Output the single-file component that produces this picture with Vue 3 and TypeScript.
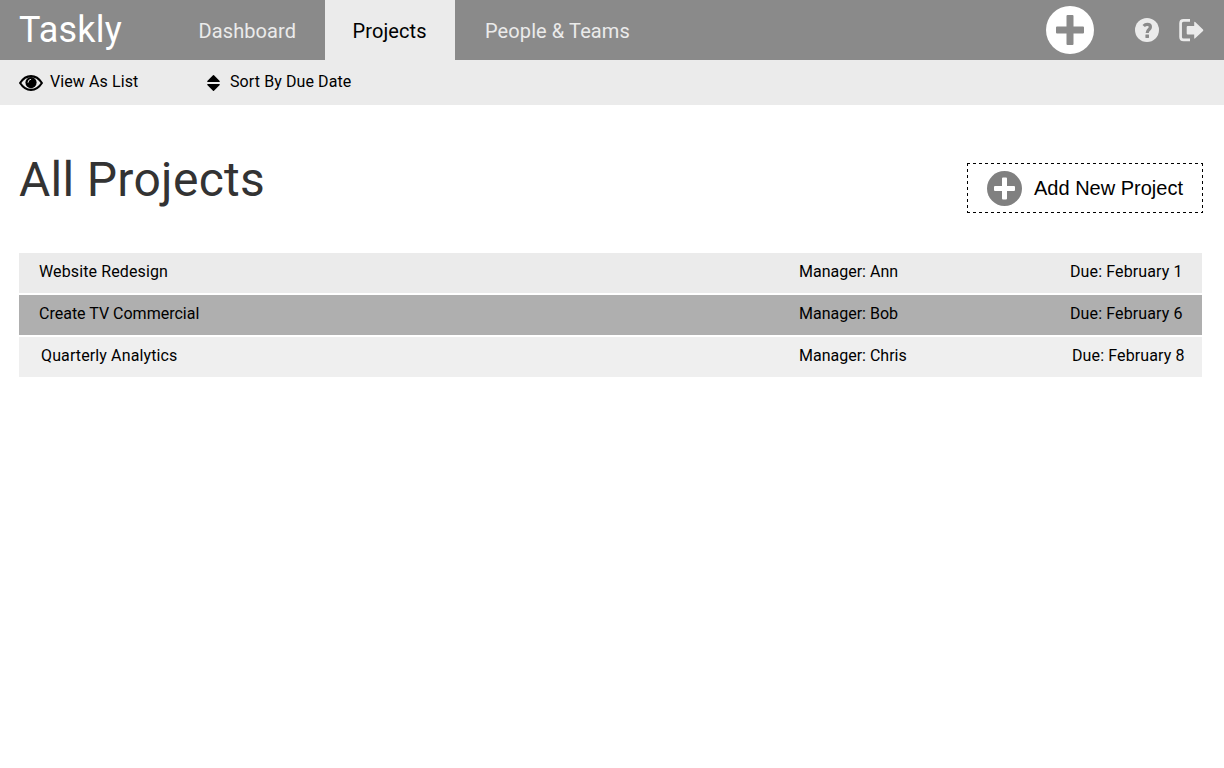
<script setup lang="ts">
interface Tab {
  label: string
  key: string
}

interface Project {
  name: string
  manager: string
  due: string
  tone: string
}

const tabs: Tab[] = [
  { label: 'Dashboard', key: 'dashboard' },
  { label: 'Projects', key: 'projects' },
  { label: 'People & Teams', key: 'people' },
]
const activeTab = 'projects'

const projects: Project[] = [
  { name: 'Website Redesign', manager: 'Ann', due: 'February 1', tone: 'plain' },
  { name: 'Create TV Commercial', manager: 'Bob', due: 'February 6', tone: 'selected' },
  { name: 'Quarterly Analytics', manager: 'Chris', due: 'February 8', tone: 'light' },
]
</script>

<template>
  <div class="page">
    <header class="topbar">
      <div class="brand"><span>Taskly</span></div>
      <nav class="tabs">
        <a v-for="tab in tabs" :key="tab.key" :class="['tab', tab.key, { active: tab.key === activeTab }]">
          <span>{{ tab.label }}</span>
        </a>
      </nav>
      <div class="actions">
        <svg class="add" viewBox="0 0 48 48">
          <circle cx="24" cy="24" r="24" fill="#fff" />
          <path d="M21.500 9h5a1 1 0 0 1 1 1v10.500h9.500a1 1 0 0 1 1 1v5a1 1 0 0 1-1 1h-9.500v10.500a1 1 0 0 1-1 1h-5a1 1 0 0 1-1-1v-10.500H11a1 1 0 0 1-1-1v-5a1 1 0 0 1 1-1h9.500V10a1 1 0 0 1 1-1z" fill="#8a8a8a" />
        </svg>
        <svg class="help" viewBox="0 0 24 24">
          <circle cx="12" cy="12" r="12" fill="#ebebeb" />
          <path d="M8.700 8C9.700 6.900 10.900 6.400 12.300 6.400c1.900 0 3.100 1 3.100 2.600 0 2.600-3.200 2.400-3.200 5.900" fill="none" stroke="#8a8a8a" stroke-width="3.200" />
          <rect x="10.400" y="16.400" width="3.600" height="3.600" rx=".4" fill="#8a8a8a" />
        </svg>
        <svg class="exit" viewBox="0 0 25 24">
          <path d="M11 2.300H4.500Q1.600 2.300 1.600 5.200V19Q1.600 21.900 4.500 21.900H11" fill="none" stroke="#ebebeb" stroke-width="2.700" />
          <path d="M8.700 8.100H15.200V4.500Q15.200 3.200 16.200 4.100L24 11.500Q24.700 12.200 24 12.900L16.200 20.300Q15.200 21.200 15.200 19.900V16.400H8.700Q7.700 16.400 7.700 15.400V9.100Q7.700 8.100 8.700 8.100z" fill="#ebebeb" />
        </svg>
      </div>
    </header>

    <div class="toolbar">
      <div class="view">
        <svg class="eye" viewBox="0 0 24 16">
          <path d="M1.100 8Q5.500 1.100 12 1.100T22.900 8Q18.500 14.900 12 14.900T1.100 8z" fill="none" stroke="#000" stroke-width="2.100" stroke-linejoin="round" />
          <circle cx="12" cy="7.600" r="5.600" />
          <path d="M9 7.300Q9 4.600 11.700 4.300" fill="none" stroke="#ebebeb" stroke-width="1" stroke-linecap="round" />
        </svg>
        <span class="view-label">View As List</span>
      </div>
      <div class="sort">
        <svg class="arrows" viewBox="0 0 13 16">
          <path d="M6 .3Q6.500-.1 7 .3L12.700 6Q13.100 7 12.300 7H.7Q-.1 7 .3 6zM.7 9H12.300Q13.100 9 12.700 10L7 15.700Q6.500 16.100 6 15.700L.3 10Q-.1 9 .7 9z" />
        </svg>
        <span class="sort-label">Sort By Due Date</span>
      </div>
    </div>

    <main>
      <div class="heading">
        <h1>All Projects</h1>
        <button class="new-project" type="button">
          <svg class="outline" width="236" height="50">
            <path d="M0 .5H236M0 49.500H236M.5 0V50M235.500 0V50" stroke="#000" stroke-dasharray="3 3" />
          </svg>
          <svg class="plus" viewBox="0 0 35 35">
            <circle cx="17.500" cy="17.500" r="17.500" fill="#808080" />
            <path d="M16 6.500h3a1 1 0 0 1 1 1V15h7a1 1 0 0 1 1 1v3a1 1 0 0 1-1 1h-7v7.500a1 1 0 0 1-1 1h-3a1 1 0 0 1-1-1V20H8a1 1 0 0 1-1-1v-3a1 1 0 0 1 1-1h7V7.500a1 1 0 0 1 1-1z" fill="#fff" />
          </svg>
          <span>Add New Project</span>
        </button>
      </div>
      <ul class="projects">
        <li v-for="p in projects" :key="p.name" :class="['project', p.tone]">
          <span class="name">{{ p.name }}</span>
          <span class="manager">Manager: {{ p.manager }}</span>
          <span class="due">Due: {{ p.due }}</span>
        </li>
      </ul>
    </main>
  </div>
</template>

<style>
body {
  margin: 0;
  background: #fff;
}
</style>

<style scoped>
.page {
  height: 768px;
  overflow: hidden;
  font: 16px/20px Roboto, "Liberation Sans", sans-serif;
  color: #000;
}
.page svg {
  display: block;
  flex: none;
}
.topbar {
  display: flex;
  height: 60px;
  background: #8a8a8a;
}
.brand {
  box-sizing: border-box;
  width: 170px;
  padding-left: 19px;
  color: #fff;
  font-size: 36px;
  line-height: 61px;
  letter-spacing: 0.2px;
}
.tabs {
  display: flex;
}
.tab {
  box-sizing: border-box;
  padding-left: 28.5px;
  width: 155px;
  color: #ebebeb;
  font-size: 20px;
  line-height: 62px;
  letter-spacing: 0.1px;
  white-space: nowrap;
}
.tab.active {
  width: 130px;
  padding-left: 27.5px;
  background: #ebebeb;
  color: #000;
}
.tab.people {
  width: 205px;
  padding-left: 30px;
}
.actions {
  display: flex;
  align-items: center;
  margin-left: auto;
  padding-right: 20px;
}
.add {
  width: 48px;
  height: 48px;
  margin-right: 41px;
}
.help {
  width: 24px;
  height: 24px;
  margin-right: 20px;
}
.exit {
  width: 25px;
  height: 24px;
}
.toolbar {
  display: flex;
  height: 45px;
  padding-left: 19px;
  background: #ebebeb;
  line-height: 43px;
  letter-spacing: 0.1px;
}
.view,
.sort {
  display: flex;
}
.view {
  width: 188px;
}
.eye {
  width: 24px;
  height: 16px;
  margin: 15px 7px 0 0;
}
.arrows {
  width: 13px;
  height: 16px;
  margin: 15px 10px 0 0;
}
main {
  padding: 0 21px 0 19px;
}
.heading {
  display: flex;
  justify-content: space-between;
  height: 148px;
}
h1 {
  margin: 45px 0 0;
  font-weight: 400;
  font-size: 48px;
  line-height: 60px;
  letter-spacing: 0.3px;
  color: #333;
}
.new-project {
  position: relative;
  display: flex;
  align-items: center;
  box-sizing: border-box;
  width: 236px;
  height: 50px;
  margin-top: 58px;
  padding: 0 0 0 20px;
  border: 0;
  background: #fff;
  color: #000;
  font: 20px/24px "Liberation Sans", Arial, sans-serif;
  white-space: nowrap;
}
.outline {
  position: absolute;
  inset: 0;
}
.plus {
  width: 35px;
  height: 35px;
  margin-right: 12px;
}
.projects {
  display: grid;
  gap: 2px;
  width: 1183px;
  margin: 0;
  padding: 0;
  list-style: none;
}
.project {
  display: grid;
  grid-template-columns: 760px 271px 1fr;
  box-sizing: border-box;
  height: 40px;
  padding: 0 0 0 20px;
  background: #ebebeb;
  line-height: 37px;
  white-space: nowrap;
}
.plain .name,
.light .name,
.due {
  letter-spacing: 0.12px;
}
.selected {
  background: #afafaf;
}
.light {
  background: #efefef;
}
.light .name,
.light .due {
  padding-left: 2px;
}
</style>
